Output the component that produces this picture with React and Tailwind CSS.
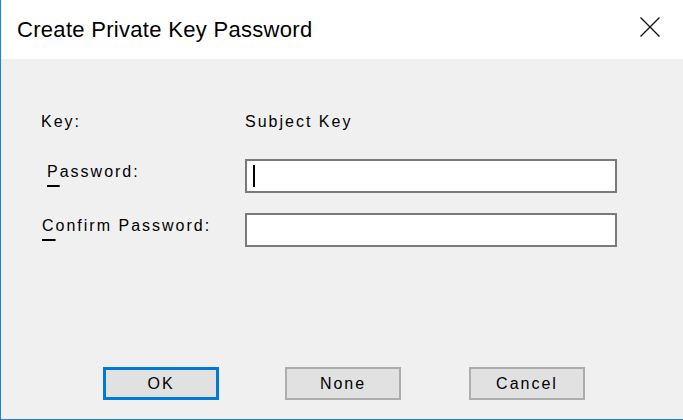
import React from "react";

const label = "text-[16px] leading-[18px] tracking-[2px] text-black";

const Field = ({ caret }) => (
  <div className="relative w-[372px] h-[34px] border-2 border-[#7a7a7a] bg-white">
    {caret && <div className="absolute left-[6px] top-[4px] w-[2px] h-[22px] bg-black" />}
  </div>
);

const Button = ({ children, focused }) => (
  <button
    type="button"
    className={
      "w-[116px] h-[33px] bg-[#e1e1e1] flex items-center justify-center text-[16px] leading-[18px] tracking-[2px] text-black " +
      (focused ? "border-[3px] border-[#0078d7]" : "border-2 border-[#adadad]")
    }
  >
    {children}
  </button>
);

const App = () => {
  return (
    <div
      className="w-[683px] h-[420px] flex flex-col bg-[#f0f0f0] border-l border-b border-[#1a82d8] overflow-hidden"
      style={{ fontFamily: '"Liberation Sans", Arial, sans-serif' }}
    >
      <div className="h-[59px] shrink-0 bg-white flex items-center justify-between pl-[16px] pr-[22px]">
        <span className="text-[22px] leading-[26px] tracking-[0.3px] text-black">
          Create Private Key Password
        </span>
        <svg width="20" height="20" viewBox="0 0 20 20" className="mt-[-5px] mr-[1px]">
          <path d="M0.5 0.5 L19.5 19.5 M19.5 0.5 L0.5 19.5" stroke="#111" strokeWidth="1.3" fill="none" />
        </svg>
      </div>

      <div className="flex flex-col pt-[54px] pl-[40px]">
        <div className="flex">
          <span className={label + " w-[204px]"}>Key:</span>
          <span className={label}>Subject Key</span>
        </div>

        <div className="flex items-start mt-[28px]">
          <span className={label + " w-[204px] mt-[4px] pl-[6px]"}>
            <span className="underline decoration-2 underline-offset-[8px]">P</span>assword:
          </span>
          <Field caret />
        </div>

        <div className="flex items-start mt-[20px]">
          <span className={label + " w-[204px] mt-[4px] pl-[1px]"}>
            <span className="underline decoration-2 underline-offset-[8px]">C</span>onfirm Password:
          </span>
          <Field />
        </div>
      </div>

      <div className="mt-auto mb-[19px] flex pl-[102px] gap-[66px]">
        <Button focused>OK</Button>
        <div>
          <Button>None</Button>
        </div>
        <div className="ml-[2px]">
          <Button>Cancel</Button>
        </div>
      </div>
    </div>
  );
};

export default App;
